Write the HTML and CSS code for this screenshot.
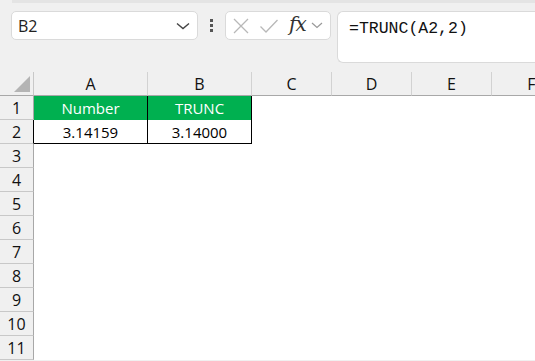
FILE: index.html
```html
<!DOCTYPE html>
<html>
<head>
<meta charset="utf-8">
<link rel="stylesheet" href="styles.css">
</head>
<body>
<div class="app">
  <div class="topband"></div>
  <div class="toolbar">
    <div class="namebox">
      <span class="ref">B2</span>
      <svg class="chev" width="14" height="8" viewBox="0 0 14 8"><path d="M1 1.5 L7 6.5 L13 1.5" fill="none" stroke="#444" stroke-width="1.4"/></svg>
    </div>
    <div class="dots"><i></i><i></i><i></i></div>
    <div class="iconbox">
      <svg class="ic" width="18" height="18" viewBox="0 0 18 18"><path d="M2 2 L16 16 M16 2 L2 16" stroke="#b8b8b8" stroke-width="1.3" fill="none"/></svg>
      <svg class="ic" width="20" height="18" viewBox="0 0 20 18"><path d="M1.5 9.5 L7 15 L18.5 3" stroke="#b8b8b8" stroke-width="1.3" fill="none"/></svg>
      <span class="fx">fx</span>
      <svg class="chev2" width="12" height="7" viewBox="0 0 12 7"><path d="M1 1 L6 5.5 L11 1" fill="none" stroke="#999" stroke-width="1.2"/></svg>
    </div>
    <div class="formula">=TRUNC(A2,2)</div>
  </div>
  <div class="grid">
    <div class="corner"><span class="tri"></span></div>
    <div class="ch">A</div>
    <div class="ch">B</div>
    <div class="ch">C</div>
    <div class="ch">D</div>
    <div class="ch">E</div>
    <div class="ch">F</div>

    <div class="rh">1</div>
    <div class="c head">Number</div>
    <div class="c head bl">TRUNC</div>
    <div class="c"></div><div class="c"></div><div class="c"></div><div class="c"></div>

    <div class="rh dark">2</div>
    <div class="c val">3.14159</div>
    <div class="c val bl">3.14000</div>
    <div class="c"></div><div class="c"></div><div class="c"></div><div class="c"></div>

    <div class="rh">3</div><div class="c"></div><div class="c"></div><div class="c"></div><div class="c"></div><div class="c"></div><div class="c"></div>
    <div class="rh">4</div><div class="c"></div><div class="c"></div><div class="c"></div><div class="c"></div><div class="c"></div><div class="c"></div>
    <div class="rh">5</div><div class="c"></div><div class="c"></div><div class="c"></div><div class="c"></div><div class="c"></div><div class="c"></div>
    <div class="rh">6</div><div class="c"></div><div class="c"></div><div class="c"></div><div class="c"></div><div class="c"></div><div class="c"></div>
    <div class="rh">7</div><div class="c"></div><div class="c"></div><div class="c"></div><div class="c"></div><div class="c"></div><div class="c"></div>
    <div class="rh">8</div><div class="c"></div><div class="c"></div><div class="c"></div><div class="c"></div><div class="c"></div><div class="c"></div>
    <div class="rh">9</div><div class="c"></div><div class="c"></div><div class="c"></div><div class="c"></div><div class="c"></div><div class="c"></div>
    <div class="rh">10</div><div class="c"></div><div class="c"></div><div class="c"></div><div class="c"></div><div class="c"></div><div class="c"></div>
    <div class="rh">11</div><div class="c"></div><div class="c"></div><div class="c"></div><div class="c"></div><div class="c"></div><div class="c"></div>
  </div>
</div>
</body>
</html>
```
FILE: styles.css
```css
* { box-sizing: border-box; }
html, body { margin: 0; padding: 0; }
body {
  width: 535px;
  height: 361px;
  overflow: hidden;
  background: #f0f0f0;
  font-family: "Open Sans", "Liberation Sans", sans-serif;
  color: #000;
}
.app { width: 535px; height: 361px; overflow: hidden; position: relative; }
.topband {
  height: 3px;
  margin-left: 12px;
  background: #e4e4e4;
}
.toolbar {
  height: 69px;
  display: flex;
  align-items: flex-start;
  padding-top: 8px;
  padding-left: 11px;
}
.namebox {
  width: 187px;
  height: 29px;
  background: #fff;
  border: 1px solid #dadada;
  border-radius: 5px;
  display: flex;
  align-items: center;
  justify-content: space-between;
  padding: 0 7px 0 6px;
}
.ref { font-size: 16px; color: #222; }
.chev { margin-top: 1px; }
.dots {
  width: 27px;
  height: 29px;
  display: flex;
  flex-direction: column;
  align-items: center;
  justify-content: center;
  gap: 2px;
}
.dots i { display: block; width: 3px; height: 3px; background: #555; }
.iconbox {
  width: 106px;
  height: 29px;
  background: #fff;
  border: 1px solid #dadada;
  border-radius: 5px;
  display: flex;
  align-items: center;
  padding-left: 6px;
}
.iconbox .ic:first-child { margin-right: 9px; }
.iconbox .ic:nth-child(2) { margin-right: 10px; }
.fx {
  font-family: "DejaVu Serif", "Liberation Serif", serif;
  font-style: italic;
  font-size: 20px;
  color: #333;
  line-height: 1;
  margin-top: -3px;
  letter-spacing: -1px;
}
.chev2 { margin-left: 5px; }
.formula {
  margin-left: 6px;
  flex: 1;
  height: 52px;
  background: #fff;
  border: 1px solid #dadada;
  border-right: none;
  border-radius: 6px 0 0 6px;
  font-family: "Liberation Mono", monospace;
  font-size: 16.5px;
  color: #111;
  padding: 7px 0 0 11px;
  line-height: 20px;
}
.grid {
  display: grid;
  grid-template-columns: 34px 114px 104px 80px 80px 80px 80px;
  grid-auto-rows: 24px;
}
.corner {
  background: #f0f0f0;
  border-right: 1px solid #c8c8c8;
  border-bottom: 1px solid #a8a8a8;
  position: relative;
}
.tri {
  position: absolute;
  right: 3px;
  bottom: 3px;
  width: 0; height: 0;
  border-left: 16px solid transparent;
  border-bottom: 16px solid #b4b4b4;
}
.ch {
  background: #f0f0f0;
  border-right: 1px solid #d2d2d2;
  border-bottom: 1px solid #a8a8a8;
  font-size: 16px;
  display: flex;
  align-items: center;
  justify-content: center;
  color: #111;
  padding-top: 1px;
}
.rh {
  background: #f0f0f0;
  border-right: 1px solid #a8a8a8;
  border-bottom: 1px solid #c8c8c8;
  font-size: 16px;
  display: flex;
  align-items: center;
  justify-content: center;
  color: #111;
}
.rh.dark { border-right-color: #000; }
.c { background: #fff; }
.head {
  background: #00b050;
  color: #fff;
  font-size: 15px;
  display: flex;
  align-items: center;
  justify-content: center;
}
.val {
  font-size: 15px;
  display: flex;
  align-items: center;
  justify-content: center;
  border-bottom: 1px solid #000;
  padding-top: 1px;
}
.head, .val { border-right: 1px solid #000; }
```
